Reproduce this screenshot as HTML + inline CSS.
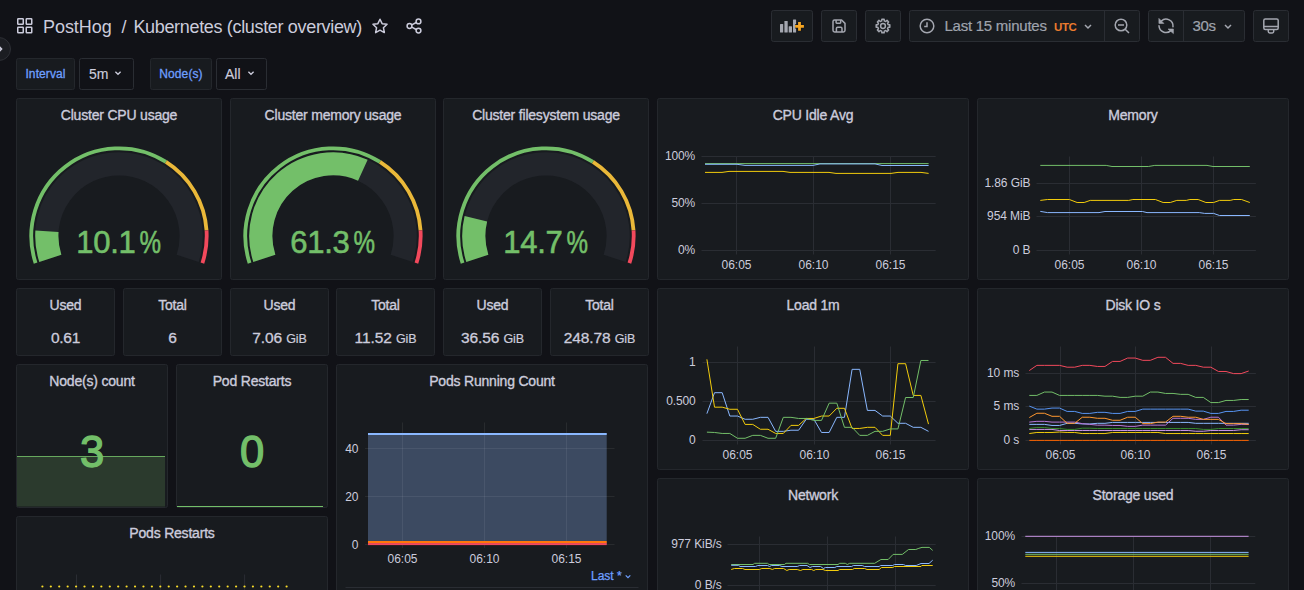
<!DOCTYPE html><html><head><meta charset="utf-8"><style>html,body{margin:0;padding:0;background:#111217;width:1304px;height:590px;overflow:hidden;position:relative}</style></head><body><svg width="1304" height="590" viewBox="0 0 1304 590" style="position:absolute;left:0;top:0;font-family:'Liberation Sans', sans-serif">
<rect width="1304" height="590" fill="#111217"/>
<rect x="17.75" y="18.75" width="5.5" height="5.5" rx="0.6" fill="none" stroke="#ccccdc" stroke-width="1.5"/>
<rect x="26.25" y="18.75" width="5.5" height="5.5" rx="0.6" fill="none" stroke="#ccccdc" stroke-width="1.5"/>
<rect x="17.75" y="27.25" width="5.5" height="5.5" rx="0.6" fill="none" stroke="#ccccdc" stroke-width="1.5"/>
<rect x="26.25" y="27.25" width="5.5" height="5.5" rx="0.6" fill="none" stroke="#ccccdc" stroke-width="1.5"/>
<text x="43" y="33" text-anchor="start" style="font-size:18px;fill:#ccccdc;font-weight:400;letter-spacing:-0.05px;" >PostHog</text>
<text x="121.5" y="33" text-anchor="start" style="font-size:18px;fill:#ccccdc;font-weight:400;" >/</text>
<text x="133.4" y="33" text-anchor="start" style="font-size:18px;fill:#ccccdc;font-weight:400;letter-spacing:-0.33px;" >Kubernetes (cluster overview)</text>
<polygon points="380.00,19.20 382.12,23.69 387.04,24.31 383.42,27.71 384.35,32.59 380.00,30.20 375.65,32.59 376.58,27.71 372.96,24.31 377.88,23.69" fill="none" stroke="#ccccdc" stroke-width="1.5" stroke-linejoin="round"/>
<g fill="none" stroke="#ccccdc" stroke-width="1.5"><circle cx="409.5" cy="26" r="2.4"/><circle cx="418.5" cy="21.4" r="2.4"/><circle cx="418.5" cy="30.6" r="2.4"/><path d="M411.8 24.8 L416.2 22.5 M411.8 27.2 L416.2 29.5"/></g>
<circle cx="-1" cy="49" r="11.5" fill="#1b1d22" stroke="#2d2f35" stroke-width="1"/>
<path d="M-1 46.5 L1.5 49 L-1 51.5" fill="none" stroke="#ccccdc" stroke-width="1.6"/>
<rect x="771.5" y="10.5" width="41" height="31" rx="2" fill="#181b1f" stroke="#2a2d33" stroke-width="1"/>
<rect x="821.5" y="10.5" width="35" height="31" rx="2" fill="#181b1f" stroke="#2a2d33" stroke-width="1"/>
<rect x="865.5" y="10.5" width="35" height="31" rx="2" fill="#181b1f" stroke="#2a2d33" stroke-width="1"/>
<rect x="909.5" y="10.5" width="230" height="31" rx="2" fill="#181b1f" stroke="#2a2d33" stroke-width="1"/>
<rect x="1148.5" y="10.5" width="96" height="31" rx="2" fill="#181b1f" stroke="#2a2d33" stroke-width="1"/>
<rect x="1253.5" y="10.5" width="35" height="31" rx="2" fill="#181b1f" stroke="#2a2d33" stroke-width="1"/>
<line x1="1104.5" y1="11" x2="1104.5" y2="41" stroke="#2a2d33"/>
<line x1="1183.5" y1="11" x2="1183.5" y2="41" stroke="#2a2d33"/>
<g fill="#a4a7b0"><rect x="780" y="24" width="3.2" height="8.6" rx="0.5"/><rect x="784.4" y="21.1" width="3.3" height="11.5" rx="0.5"/><rect x="788.7" y="26.3" width="3.3" height="6.3" rx="0.5"/><rect x="793" y="19.4" width="3.1" height="13.2" rx="0.5"/></g>
<path d="M799.5 22 V30.8 M795.1 26.4 H803.9" stroke="#111217" stroke-width="4.4"/>
<path d="M799.5 22 V30.8 M795.1 26.4 H803.9" stroke="#f5a623" stroke-width="2.8"/>
<g fill="none" stroke="#a4a7b0" stroke-width="1.5" stroke-linejoin="round"><path d="M834.6 19.95 H841.6 L845 23.35 V30.35 Q845 31.95 843.4 31.95 H834.6 Q833 31.95 833 30.35 V21.55 Q833 19.95 834.6 19.95 Z"/><path d="M836.1 20 V22.5 Q836.1 23.2 836.8 23.2 H840 Q840.7 23.2 840.7 22.5 V20"/><path d="M836.4 31.9 V28.4 Q836.4 27.3 837.5 27.3 H840.9 Q842 27.3 842 28.4 V31.9"/></g>
<path d="M881.72 20.86 L881.87 19.19 L884.13 19.19 L884.28 20.86 L885.73 21.46 L887.01 20.39 L888.61 21.99 L887.54 23.27 L888.14 24.72 L889.81 24.87 L889.81 27.13 L888.14 27.28 L887.54 28.73 L888.61 30.01 L887.01 31.61 L885.73 30.54 L884.28 31.14 L884.13 32.81 L881.87 32.81 L881.72 31.14 L880.27 30.54 L878.99 31.61 L877.39 30.01 L878.46 28.73 L877.86 27.28 L876.19 27.13 L876.19 24.87 L877.86 24.72 L878.46 23.27 L877.39 21.99 L878.99 20.39 L880.27 21.46 Z" fill="none" stroke="#a4a7b0" stroke-width="1.5" stroke-linejoin="round"/>
<circle cx="883" cy="26" r="2.4" fill="none" stroke="#a4a7b0" stroke-width="1.5"/>
<g fill="none" stroke="#a4a7b0" stroke-width="1.5"><circle cx="927" cy="26" r="6.8"/><path d="M927 22.2 V26.4 H924.2"/></g>
<text x="944.5" y="31" text-anchor="start" style="font-size:15px;fill:#9fa3ad;font-weight:400;letter-spacing:-0.25px;stroke:#9fa3ad;stroke-width:0.2px;" >Last 15 minutes</text>
<text x="1054" y="31" text-anchor="start" style="font-size:11.5px;fill:#eb7b2e;font-weight:700;letter-spacing:-0.4px;" >UTC</text>
<path d="M1085 25.0 L1088 28.0 L1091 25.0" fill="none" stroke="#a4a7b0" stroke-width="1.5"/>
<g fill="none" stroke="#a4a7b0" stroke-width="1.5"><circle cx="1121" cy="25" r="5.8"/><path d="M1125.2 29.2 L1129 33 M1118 25 H1124"/></g>
<g fill="none" stroke="#a4a7b0" stroke-width="1.5" stroke-linecap="round"><path d="M1161.3 21 A7 7 0 0 1 1173 26.8"/><path d="M1159 25.8 A7 7 0 0 0 1170.8 30.6"/></g>
<path d="M1158.9 18.4 L1158.9 23.4 L1163.9 23.4 Z" fill="#a4a7b0" stroke="#a4a7b0" stroke-width="0.6" stroke-linejoin="round"/><path d="M1168 29 L1173.4 29 L1173.4 33.6 Z" fill="#a4a7b0" stroke="#a4a7b0" stroke-width="0.6" stroke-linejoin="round"/>
<text x="1192.5" y="31" text-anchor="start" style="font-size:15px;fill:#9fa3ad;font-weight:400;letter-spacing:-0.4px;stroke:#9fa3ad;stroke-width:0.2px;" >30s</text>
<path d="M1225 25.0 L1228 28.0 L1231 25.0" fill="none" stroke="#a4a7b0" stroke-width="1.5"/>
<g fill="none" stroke="#a4a7b0" stroke-width="1.5"><rect x="1263.8" y="19" width="14.4" height="10.5" rx="1.5"/><path d="M1264 26.5 H1278"/><path d="M1268.3 29.8 V31.6 Q1268.3 33 1269.7 33 H1272.3 Q1273.7 33 1273.7 31.6 V29.8"/></g>
<rect x="16.5" y="58.5" width="58" height="31" rx="2" fill="#181b1f" stroke="#24272c"/>
<text x="45.5" y="78" text-anchor="middle" style="font-size:12px;fill:#6e9fff;font-weight:400;letter-spacing:0.1px;stroke:#6e9fff;stroke-width:0.3px;" >Interval</text>
<rect x="79.5" y="58.5" width="54" height="31" rx="2" fill="#111217" stroke="#2a2d33"/>
<text x="89" y="79" text-anchor="start" style="font-size:14px;fill:#ccccdc;font-weight:400;stroke:#ccccdc;stroke-width:0.15px;" >5m</text>
<path d="M115.4 71.7 L118 74.3 L120.6 71.7" fill="none" stroke="#ccccdc" stroke-width="1.3"/>
<rect x="150.5" y="58.5" width="61" height="31" rx="2" fill="#181b1f" stroke="#24272c"/>
<text x="181.0" y="78" text-anchor="middle" style="font-size:12px;fill:#6e9fff;font-weight:400;letter-spacing:0.1px;stroke:#6e9fff;stroke-width:0.3px;" >Node(s)</text>
<rect x="216.5" y="58.5" width="50" height="31" rx="2" fill="#111217" stroke="#2a2d33"/>
<text x="225" y="79" text-anchor="start" style="font-size:14px;fill:#ccccdc;font-weight:400;stroke:#ccccdc;stroke-width:0.15px;" >All</text>
<path d="M248.4 71.7 L251 74.3 L253.6 71.7" fill="none" stroke="#ccccdc" stroke-width="1.3"/>
<rect x="16.5" y="98.5" width="205" height="181" rx="2" ry="2" fill="#181b1f" stroke="#24272c" stroke-width="1"/>
<text x="119.0" y="120" text-anchor="middle" style="font-size:14px;fill:#ccccdc;font-weight:400;letter-spacing:-0.2px;stroke:#ccccdc;stroke-width:0.35px;" >Cluster CPU usage</text>
<path d="M35.59 263.10 A87.7 87.7 0 0 1 165.99 161.95" fill="none" stroke="#73bf69" stroke-width="3.8"/>
<path d="M165.99 161.95 A87.7 87.7 0 0 1 206.53 230.49" fill="none" stroke="#eab839" stroke-width="3.8"/>
<path d="M206.53 230.49 A87.7 87.7 0 0 1 202.41 263.10" fill="none" stroke="#f2495c" stroke-width="3.8"/>
<path d="M50.33 258.31 A72.2 72.2 0 1 1 187.67 258.31" fill="none" stroke="#22252b" stroke-width="23.2"/>
<path d="M50.33 258.31 A72.2 72.2 0 0 1 46.96 231.19" fill="none" stroke="#73bf69" stroke-width="23.2"/>
<text x="135.4" y="253" text-anchor="end" style="font-size:31px;fill:#73bf69;stroke:#73bf69;stroke-width:0.6px;letter-spacing:-0.3px">10.1</text>
<text transform="translate(139.4,253) scale(0.78,1)" style="font-size:31px;fill:#73bf69;stroke:#73bf69;stroke-width:0.6px">%</text>
<rect x="230.5" y="98.5" width="205" height="181" rx="2" ry="2" fill="#181b1f" stroke="#24272c" stroke-width="1"/>
<text x="333.0" y="120" text-anchor="middle" style="font-size:14px;fill:#ccccdc;font-weight:400;letter-spacing:-0.2px;stroke:#ccccdc;stroke-width:0.35px;" >Cluster memory usage</text>
<path d="M249.59 263.10 A87.7 87.7 0 0 1 379.99 161.95" fill="none" stroke="#73bf69" stroke-width="3.8"/>
<path d="M379.99 161.95 A87.7 87.7 0 0 1 420.53 230.49" fill="none" stroke="#eab839" stroke-width="3.8"/>
<path d="M420.53 230.49 A87.7 87.7 0 0 1 416.41 263.10" fill="none" stroke="#f2495c" stroke-width="3.8"/>
<path d="M264.33 258.31 A72.2 72.2 0 1 1 401.67 258.31" fill="none" stroke="#22252b" stroke-width="23.2"/>
<path d="M264.33 258.31 A72.2 72.2 0 0 1 362.84 170.25" fill="none" stroke="#73bf69" stroke-width="23.2"/>
<text x="349.4" y="253" text-anchor="end" style="font-size:31px;fill:#73bf69;stroke:#73bf69;stroke-width:0.6px;letter-spacing:-0.3px">61.3</text>
<text transform="translate(353.4,253) scale(0.78,1)" style="font-size:31px;fill:#73bf69;stroke:#73bf69;stroke-width:0.6px">%</text>
<rect x="443.5" y="98.5" width="205" height="181" rx="2" ry="2" fill="#181b1f" stroke="#24272c" stroke-width="1"/>
<text x="546.0" y="120" text-anchor="middle" style="font-size:14px;fill:#ccccdc;font-weight:400;letter-spacing:-0.2px;stroke:#ccccdc;stroke-width:0.35px;" >Cluster filesystem usage</text>
<path d="M462.59 263.10 A87.7 87.7 0 0 1 592.99 161.95" fill="none" stroke="#73bf69" stroke-width="3.8"/>
<path d="M592.99 161.95 A87.7 87.7 0 0 1 633.53 230.49" fill="none" stroke="#eab839" stroke-width="3.8"/>
<path d="M633.53 230.49 A87.7 87.7 0 0 1 629.41 263.10" fill="none" stroke="#f2495c" stroke-width="3.8"/>
<path d="M477.33 258.31 A72.2 72.2 0 1 1 614.67 258.31" fill="none" stroke="#22252b" stroke-width="23.2"/>
<path d="M477.33 258.31 A72.2 72.2 0 0 1 475.87 218.84" fill="none" stroke="#73bf69" stroke-width="23.2"/>
<text x="562.4" y="253" text-anchor="end" style="font-size:31px;fill:#73bf69;stroke:#73bf69;stroke-width:0.6px;letter-spacing:-0.3px">14.7</text>
<text transform="translate(566.4,253) scale(0.78,1)" style="font-size:31px;fill:#73bf69;stroke:#73bf69;stroke-width:0.6px">%</text>
<rect x="16.5" y="288.5" width="98" height="67" rx="2" ry="2" fill="#181b1f" stroke="#24272c" stroke-width="1"/>
<text x="65.5" y="310" text-anchor="middle" style="font-size:14px;fill:#ccccdc;font-weight:400;letter-spacing:-0.2px;stroke:#ccccdc;stroke-width:0.35px;" >Used</text>
<text x="65.5" y="343.2" text-anchor="middle" style="font-size:15.5px;fill:#ccccdc;font-weight:400;letter-spacing:-0.3px;stroke:#ccccdc;stroke-width:0.3px;" >0.61</text>
<rect x="123.5" y="288.5" width="98" height="67" rx="2" ry="2" fill="#181b1f" stroke="#24272c" stroke-width="1"/>
<text x="172.5" y="310" text-anchor="middle" style="font-size:14px;fill:#ccccdc;font-weight:400;letter-spacing:-0.2px;stroke:#ccccdc;stroke-width:0.35px;" >Total</text>
<text x="172.5" y="343.2" text-anchor="middle" style="font-size:15.5px;fill:#ccccdc;font-weight:400;letter-spacing:-0.3px;stroke:#ccccdc;stroke-width:0.3px;" >6</text>
<rect x="230.5" y="288.5" width="98" height="67" rx="2" ry="2" fill="#181b1f" stroke="#24272c" stroke-width="1"/>
<text x="279.5" y="310" text-anchor="middle" style="font-size:14px;fill:#ccccdc;font-weight:400;letter-spacing:-0.2px;stroke:#ccccdc;stroke-width:0.35px;" >Used</text>
<text x="279.5" y="343.2" text-anchor="middle" style="font-size:15.5px;fill:#ccccdc;stroke:#ccccdc;stroke-width:0.3px;letter-spacing:-0.1px">7.06 <tspan style="font-size:12.5px;stroke-width:0.2px">GiB</tspan></text>
<rect x="336.5" y="288.5" width="98" height="67" rx="2" ry="2" fill="#181b1f" stroke="#24272c" stroke-width="1"/>
<text x="385.5" y="310" text-anchor="middle" style="font-size:14px;fill:#ccccdc;font-weight:400;letter-spacing:-0.2px;stroke:#ccccdc;stroke-width:0.35px;" >Total</text>
<text x="385.5" y="343.2" text-anchor="middle" style="font-size:15.5px;fill:#ccccdc;stroke:#ccccdc;stroke-width:0.3px;letter-spacing:-0.1px">11.52 <tspan style="font-size:12.5px;stroke-width:0.2px">GiB</tspan></text>
<rect x="443.5" y="288.5" width="98" height="67" rx="2" ry="2" fill="#181b1f" stroke="#24272c" stroke-width="1"/>
<text x="492.5" y="310" text-anchor="middle" style="font-size:14px;fill:#ccccdc;font-weight:400;letter-spacing:-0.2px;stroke:#ccccdc;stroke-width:0.35px;" >Used</text>
<text x="492.5" y="343.2" text-anchor="middle" style="font-size:15.5px;fill:#ccccdc;stroke:#ccccdc;stroke-width:0.3px;letter-spacing:-0.1px">36.56 <tspan style="font-size:12.5px;stroke-width:0.2px">GiB</tspan></text>
<rect x="550.5" y="288.5" width="98" height="67" rx="2" ry="2" fill="#181b1f" stroke="#24272c" stroke-width="1"/>
<text x="599.5" y="310" text-anchor="middle" style="font-size:14px;fill:#ccccdc;font-weight:400;letter-spacing:-0.2px;stroke:#ccccdc;stroke-width:0.35px;" >Total</text>
<text x="599.5" y="343.2" text-anchor="middle" style="font-size:15.5px;fill:#ccccdc;stroke:#ccccdc;stroke-width:0.3px;letter-spacing:-0.1px">248.78 <tspan style="font-size:12.5px;stroke-width:0.2px">GiB</tspan></text>
<rect x="16.5" y="364.5" width="151" height="143" rx="2" ry="2" fill="#181b1f" stroke="#24272c" stroke-width="1"/>
<text x="92.0" y="386" text-anchor="middle" style="font-size:14px;fill:#ccccdc;font-weight:400;letter-spacing:-0.2px;stroke:#ccccdc;stroke-width:0.35px;" >Node(s) count</text>
<rect x="17" y="456.5" width="148" height="50.0" fill="#2b3a2d"/>
<line x1="17" y1="456.5" x2="165" y2="456.5" stroke="#73bf69" stroke-width="1" stroke-opacity="0.85"/>
<text x="92.0" y="467.0" text-anchor="middle" style="font-size:43.6px;fill:#73bf69;font-weight:400;stroke:#73bf69;stroke-width:1.3px;" >3</text>
<rect x="176.5" y="364.5" width="151" height="143" rx="2" ry="2" fill="#181b1f" stroke="#24272c" stroke-width="1"/>
<text x="252.0" y="386" text-anchor="middle" style="font-size:14px;fill:#ccccdc;font-weight:400;letter-spacing:-0.2px;stroke:#ccccdc;stroke-width:0.35px;" >Pod Restarts</text>
<line x1="177" y1="506.5" x2="323" y2="506.5" stroke="#73bf69" stroke-width="1"/>
<text x="252.0" y="467.0" text-anchor="middle" style="font-size:43.6px;fill:#73bf69;font-weight:400;stroke:#73bf69;stroke-width:1.3px;" >0</text>
<rect x="336.5" y="364.5" width="311" height="239" rx="2" ry="2" fill="#181b1f" stroke="#24272c" stroke-width="1"/>
<text x="492.0" y="386" text-anchor="middle" style="font-size:14px;fill:#ccccdc;font-weight:400;letter-spacing:-0.2px;stroke:#ccccdc;stroke-width:0.35px;" >Pods Running Count</text>
<rect x="368" y="433" width="238.7" height="111.5" fill="#3c4a61"/>
<line x1="365" y1="448.5" x2="614.5" y2="448.5" stroke="#ffffff" stroke-opacity="0.07" stroke-width="1"/>
<line x1="365" y1="496.5" x2="614.5" y2="496.5" stroke="#ffffff" stroke-opacity="0.07" stroke-width="1"/>
<line x1="365" y1="544.5" x2="614.5" y2="544.5" stroke="#ffffff" stroke-opacity="0.07" stroke-width="1"/>
<line x1="402.5" y1="422.5" x2="402.5" y2="548" stroke="#ffffff" stroke-opacity="0.07" stroke-width="1"/>
<line x1="484.5" y1="422.5" x2="484.5" y2="548" stroke="#ffffff" stroke-opacity="0.07" stroke-width="1"/>
<line x1="566.5" y1="422.5" x2="566.5" y2="548" stroke="#ffffff" stroke-opacity="0.07" stroke-width="1"/>
<line x1="368" y1="434" x2="606.7" y2="434" stroke="#8ab8ff" stroke-width="2"/>
<rect x="368" y="541" width="238.7" height="2.2" fill="#ff780a"/>
<rect x="368" y="543.1" width="238.7" height="2" fill="#f2495c"/>
<text x="358.5" y="452.5" text-anchor="end" style="font-size:12px;fill:#ccccdc;font-weight:400;" >40</text>
<text x="358.5" y="500.5" text-anchor="end" style="font-size:12px;fill:#ccccdc;font-weight:400;" >20</text>
<text x="358.5" y="548.5" text-anchor="end" style="font-size:12px;fill:#ccccdc;font-weight:400;" >0</text>
<text x="402.5" y="563" text-anchor="middle" style="font-size:12px;fill:#ccccdc;font-weight:400;" >06:05</text>
<text x="484.5" y="563" text-anchor="middle" style="font-size:12px;fill:#ccccdc;font-weight:400;" >06:10</text>
<text x="566.5" y="563" text-anchor="middle" style="font-size:12px;fill:#ccccdc;font-weight:400;" >06:15</text>
<text x="591" y="580" text-anchor="start" style="font-size:12px;fill:#6e9fff;font-weight:400;stroke:#6e9fff;stroke-width:0.25px;" >Last *</text>
<path d="M625.7 575.35 L628 577.65 L630.3 575.35" fill="none" stroke="#6e9fff" stroke-width="1.2"/>
<line x1="345.5" y1="587.5" x2="638.5" y2="587.5" stroke="#2a2d33" stroke-width="1"/>
<rect x="16.5" y="516.5" width="311" height="199" rx="2" ry="2" fill="#181b1f" stroke="#24272c" stroke-width="1"/>
<text x="172.0" y="538" text-anchor="middle" style="font-size:14px;fill:#ccccdc;font-weight:400;letter-spacing:-0.2px;stroke:#ccccdc;stroke-width:0.35px;" >Pods Restarts</text>
<line x1="76.5" y1="574.5" x2="76.5" y2="590" stroke="#2a2d33" stroke-width="1"/>
<line x1="160.6" y1="574.5" x2="160.6" y2="590" stroke="#2a2d33" stroke-width="1"/>
<line x1="244.6" y1="574.5" x2="244.6" y2="590" stroke="#2a2d33" stroke-width="1"/>
<circle cx="42.40" cy="586.5" r="1.1" fill="#fade2a"/>
<circle cx="50.82" cy="586.5" r="1.1" fill="#fade2a"/>
<circle cx="59.24" cy="586.5" r="1.1" fill="#fade2a"/>
<circle cx="67.66" cy="586.5" r="1.1" fill="#fade2a"/>
<circle cx="76.08" cy="586.5" r="1.1" fill="#fade2a"/>
<circle cx="84.50" cy="586.5" r="1.1" fill="#fade2a"/>
<circle cx="92.92" cy="586.5" r="1.1" fill="#fade2a"/>
<circle cx="101.34" cy="586.5" r="1.1" fill="#fade2a"/>
<circle cx="109.77" cy="586.5" r="1.1" fill="#fade2a"/>
<circle cx="118.19" cy="586.5" r="1.1" fill="#fade2a"/>
<circle cx="126.61" cy="586.5" r="1.1" fill="#fade2a"/>
<circle cx="135.03" cy="586.5" r="1.1" fill="#fade2a"/>
<circle cx="143.45" cy="586.5" r="1.1" fill="#fade2a"/>
<circle cx="151.87" cy="586.5" r="1.1" fill="#fade2a"/>
<circle cx="160.29" cy="586.5" r="1.1" fill="#fade2a"/>
<circle cx="168.71" cy="586.5" r="1.1" fill="#fade2a"/>
<circle cx="177.13" cy="586.5" r="1.1" fill="#fade2a"/>
<circle cx="185.55" cy="586.5" r="1.1" fill="#fade2a"/>
<circle cx="193.97" cy="586.5" r="1.1" fill="#fade2a"/>
<circle cx="202.39" cy="586.5" r="1.1" fill="#fade2a"/>
<circle cx="210.81" cy="586.5" r="1.1" fill="#fade2a"/>
<circle cx="219.23" cy="586.5" r="1.1" fill="#fade2a"/>
<circle cx="227.66" cy="586.5" r="1.1" fill="#fade2a"/>
<circle cx="236.08" cy="586.5" r="1.1" fill="#fade2a"/>
<circle cx="244.50" cy="586.5" r="1.1" fill="#fade2a"/>
<circle cx="252.92" cy="586.5" r="1.1" fill="#fade2a"/>
<circle cx="261.34" cy="586.5" r="1.1" fill="#fade2a"/>
<circle cx="269.76" cy="586.5" r="1.1" fill="#fade2a"/>
<circle cx="278.18" cy="586.5" r="1.1" fill="#fade2a"/>
<circle cx="286.60" cy="586.5" r="1.1" fill="#fade2a"/>
<rect x="657.5" y="98.5" width="311" height="181" rx="2" ry="2" fill="#181b1f" stroke="#24272c" stroke-width="1"/>
<text x="813.0" y="120" text-anchor="middle" style="font-size:14px;fill:#ccccdc;font-weight:400;letter-spacing:-0.2px;stroke:#ccccdc;stroke-width:0.35px;" >CPU Idle Avg</text>
<rect x="977.5" y="98.5" width="311" height="181" rx="2" ry="2" fill="#181b1f" stroke="#24272c" stroke-width="1"/>
<text x="1133.0" y="120" text-anchor="middle" style="font-size:14px;fill:#ccccdc;font-weight:400;letter-spacing:-0.2px;stroke:#ccccdc;stroke-width:0.35px;" >Memory</text>
<rect x="657.5" y="288.5" width="311" height="181" rx="2" ry="2" fill="#181b1f" stroke="#24272c" stroke-width="1"/>
<text x="813.0" y="310" text-anchor="middle" style="font-size:14px;fill:#ccccdc;font-weight:400;letter-spacing:-0.2px;stroke:#ccccdc;stroke-width:0.35px;" >Load 1m</text>
<rect x="977.5" y="288.5" width="311" height="181" rx="2" ry="2" fill="#181b1f" stroke="#24272c" stroke-width="1"/>
<text x="1133.0" y="310" text-anchor="middle" style="font-size:14px;fill:#ccccdc;font-weight:400;letter-spacing:-0.2px;stroke:#ccccdc;stroke-width:0.35px;" >Disk IO s</text>
<rect x="657.5" y="478.5" width="311" height="199" rx="2" ry="2" fill="#181b1f" stroke="#24272c" stroke-width="1"/>
<text x="813.0" y="500" text-anchor="middle" style="font-size:14px;fill:#ccccdc;font-weight:400;letter-spacing:-0.2px;stroke:#ccccdc;stroke-width:0.35px;" >Network</text>
<rect x="977.5" y="478.5" width="311" height="199" rx="2" ry="2" fill="#181b1f" stroke="#24272c" stroke-width="1"/>
<text x="1133.0" y="500" text-anchor="middle" style="font-size:14px;fill:#ccccdc;font-weight:400;letter-spacing:-0.2px;stroke:#ccccdc;stroke-width:0.35px;" >Storage used</text>
<line x1="701.5" y1="156.5" x2="935.7" y2="156.5" stroke="#2a2d33" stroke-width="1"/>
<line x1="701.5" y1="203.5" x2="935.7" y2="203.5" stroke="#2a2d33" stroke-width="1"/>
<line x1="701.5" y1="250.5" x2="935.7" y2="250.5" stroke="#2a2d33" stroke-width="1"/>
<line x1="736.5" y1="156.5" x2="736.5" y2="254.5" stroke="#2a2d33" stroke-width="1"/>
<line x1="813.5" y1="156.5" x2="813.5" y2="254.5" stroke="#2a2d33" stroke-width="1"/>
<line x1="890.5" y1="156.5" x2="890.5" y2="254.5" stroke="#2a2d33" stroke-width="1"/>
<text x="695.2" y="160.0" text-anchor="end" style="font-size:12px;fill:#ccccdc;font-weight:400;letter-spacing:-0.1px;" >100%</text>
<text x="695.2" y="207.0" text-anchor="end" style="font-size:12px;fill:#ccccdc;font-weight:400;letter-spacing:-0.1px;" >50%</text>
<text x="695.2" y="254.0" text-anchor="end" style="font-size:12px;fill:#ccccdc;font-weight:400;letter-spacing:-0.1px;" >0%</text>
<text x="736.5" y="269" text-anchor="middle" style="font-size:12px;fill:#ccccdc;font-weight:400;" >06:05</text>
<text x="813.5" y="269" text-anchor="middle" style="font-size:12px;fill:#ccccdc;font-weight:400;" >06:10</text>
<text x="890.5" y="269" text-anchor="middle" style="font-size:12px;fill:#ccccdc;font-weight:400;" >06:15</text>
<line x1="1036.5" y1="183.5" x2="1255.9" y2="183.5" stroke="#2a2d33" stroke-width="1"/>
<line x1="1036.5" y1="216.5" x2="1255.9" y2="216.5" stroke="#2a2d33" stroke-width="1"/>
<line x1="1036.5" y1="250.5" x2="1255.9" y2="250.5" stroke="#2a2d33" stroke-width="1"/>
<line x1="1069.5" y1="156.5" x2="1069.5" y2="254.5" stroke="#2a2d33" stroke-width="1"/>
<line x1="1141.5" y1="156.5" x2="1141.5" y2="254.5" stroke="#2a2d33" stroke-width="1"/>
<line x1="1213.5" y1="156.5" x2="1213.5" y2="254.5" stroke="#2a2d33" stroke-width="1"/>
<text x="1030.4" y="186.5" text-anchor="end" style="font-size:12px;fill:#ccccdc;font-weight:400;letter-spacing:-0.1px;" >1.86 GiB</text>
<text x="1030.4" y="219.5" text-anchor="end" style="font-size:12px;fill:#ccccdc;font-weight:400;letter-spacing:-0.1px;" >954 MiB</text>
<text x="1030.4" y="253.5" text-anchor="end" style="font-size:12px;fill:#ccccdc;font-weight:400;letter-spacing:-0.1px;" >0 B</text>
<text x="1069.5" y="269" text-anchor="middle" style="font-size:12px;fill:#ccccdc;font-weight:400;" >06:05</text>
<text x="1141.5" y="269" text-anchor="middle" style="font-size:12px;fill:#ccccdc;font-weight:400;" >06:10</text>
<text x="1213.5" y="269" text-anchor="middle" style="font-size:12px;fill:#ccccdc;font-weight:400;" >06:15</text>
<line x1="702.5" y1="362.5" x2="935.6" y2="362.5" stroke="#2a2d33" stroke-width="1"/>
<line x1="702.5" y1="401.5" x2="935.6" y2="401.5" stroke="#2a2d33" stroke-width="1"/>
<line x1="702.5" y1="440.5" x2="935.6" y2="440.5" stroke="#2a2d33" stroke-width="1"/>
<line x1="737.5" y1="346.5" x2="737.5" y2="444.5" stroke="#2a2d33" stroke-width="1"/>
<line x1="814.5" y1="346.5" x2="814.5" y2="444.5" stroke="#2a2d33" stroke-width="1"/>
<line x1="890.5" y1="346.5" x2="890.5" y2="444.5" stroke="#2a2d33" stroke-width="1"/>
<text x="695.7" y="366.0" text-anchor="end" style="font-size:12px;fill:#ccccdc;font-weight:400;letter-spacing:-0.1px;" >1</text>
<text x="695.7" y="405.0" text-anchor="end" style="font-size:12px;fill:#ccccdc;font-weight:400;letter-spacing:-0.1px;" >0.500</text>
<text x="695.7" y="444.0" text-anchor="end" style="font-size:12px;fill:#ccccdc;font-weight:400;letter-spacing:-0.1px;" >0</text>
<text x="737.5" y="459" text-anchor="middle" style="font-size:12px;fill:#ccccdc;font-weight:400;" >06:05</text>
<text x="814.5" y="459" text-anchor="middle" style="font-size:12px;fill:#ccccdc;font-weight:400;" >06:10</text>
<text x="890.5" y="459" text-anchor="middle" style="font-size:12px;fill:#ccccdc;font-weight:400;" >06:15</text>
<line x1="1025.5" y1="373.5" x2="1255.9" y2="373.5" stroke="#2a2d33" stroke-width="1"/>
<line x1="1025.5" y1="406.5" x2="1255.9" y2="406.5" stroke="#2a2d33" stroke-width="1"/>
<line x1="1025.5" y1="440.5" x2="1255.9" y2="440.5" stroke="#2a2d33" stroke-width="1"/>
<line x1="1060.5" y1="346.5" x2="1060.5" y2="444.5" stroke="#2a2d33" stroke-width="1"/>
<line x1="1135.5" y1="346.5" x2="1135.5" y2="444.5" stroke="#2a2d33" stroke-width="1"/>
<line x1="1211.5" y1="346.5" x2="1211.5" y2="444.5" stroke="#2a2d33" stroke-width="1"/>
<text x="1019.2" y="376.5" text-anchor="end" style="font-size:12px;fill:#ccccdc;font-weight:400;letter-spacing:-0.1px;" >10 ms</text>
<text x="1019.2" y="409.5" text-anchor="end" style="font-size:12px;fill:#ccccdc;font-weight:400;letter-spacing:-0.1px;" >5 ms</text>
<text x="1019.2" y="443.5" text-anchor="end" style="font-size:12px;fill:#ccccdc;font-weight:400;letter-spacing:-0.1px;" >0 s</text>
<text x="1060.5" y="459" text-anchor="middle" style="font-size:12px;fill:#ccccdc;font-weight:400;" >06:05</text>
<text x="1135.5" y="459" text-anchor="middle" style="font-size:12px;fill:#ccccdc;font-weight:400;" >06:10</text>
<text x="1211.5" y="459" text-anchor="middle" style="font-size:12px;fill:#ccccdc;font-weight:400;" >06:15</text>
<line x1="727.5" y1="544.5" x2="935.7" y2="544.5" stroke="#2a2d33" stroke-width="1"/>
<line x1="727.5" y1="585.5" x2="935.7" y2="585.5" stroke="#2a2d33" stroke-width="1"/>
<line x1="759.5" y1="536.5" x2="759.5" y2="590" stroke="#2a2d33" stroke-width="1"/>
<line x1="827.5" y1="536.5" x2="827.5" y2="590" stroke="#2a2d33" stroke-width="1"/>
<line x1="895.5" y1="536.5" x2="895.5" y2="590" stroke="#2a2d33" stroke-width="1"/>
<text x="721.7" y="547.5" text-anchor="end" style="font-size:12px;fill:#ccccdc;font-weight:400;letter-spacing:-0.1px;" >977 KiB/s</text>
<text x="721.7" y="588.5" text-anchor="end" style="font-size:12px;fill:#ccccdc;font-weight:400;letter-spacing:-0.1px;" >0 B/s</text>
<line x1="1021.5" y1="536.5" x2="1255.3" y2="536.5" stroke="#2a2d33" stroke-width="1"/>
<line x1="1021.5" y1="583.5" x2="1255.3" y2="583.5" stroke="#2a2d33" stroke-width="1"/>
<line x1="1056.5" y1="536.5" x2="1056.5" y2="590" stroke="#2a2d33" stroke-width="1"/>
<line x1="1133.5" y1="536.5" x2="1133.5" y2="590" stroke="#2a2d33" stroke-width="1"/>
<line x1="1210.5" y1="536.5" x2="1210.5" y2="590" stroke="#2a2d33" stroke-width="1"/>
<text x="1015.1" y="539.5" text-anchor="end" style="font-size:12px;fill:#ccccdc;font-weight:400;letter-spacing:-0.1px;" >100%</text>
<text x="1015.1" y="586.5" text-anchor="end" style="font-size:12px;fill:#ccccdc;font-weight:400;letter-spacing:-0.1px;" >50%</text>
<polyline points="705.00,163.60 928.60,163.60" fill="none" stroke="#73bf69" stroke-width="1.0" stroke-linejoin="round" stroke-opacity="1"/>
<polyline points="705.00,164.30 737.00,164.30 745.00,165.40 813.00,165.40 820.00,163.90 875.00,163.90 882.00,165.50 928.60,165.50" fill="none" stroke="#8ab8ff" stroke-width="1.0" stroke-linejoin="round" stroke-opacity="1"/>
<polyline points="705.00,172.40 722.00,172.40 729.00,171.40 783.00,171.40 790.00,172.40 829.00,172.40 836.00,173.40 891.00,173.40 898.00,172.40 921.00,172.40 928.60,173.40" fill="none" stroke="#f2cc0c" stroke-width="1.0" stroke-linejoin="round" stroke-opacity="1"/>
<polyline points="1040.30,165.40 1106.20,165.40 1112.00,166.50 1148.30,166.50 1154.80,165.40 1207.00,165.40 1213.00,166.50 1249.80,166.50" fill="none" stroke="#73bf69" stroke-width="1.0" stroke-linejoin="round" stroke-opacity="1"/>
<polyline points="1040.30,200.40 1047.50,199.50 1069.40,199.50 1077.10,202.50 1084.20,202.50 1090.20,200.40 1128.70,200.40 1132.90,199.50 1155.40,199.50 1163.10,202.50 1170.30,202.50 1176.80,200.40 1186.30,200.40 1189.90,199.50 1198.20,199.50 1205.90,202.50 1213.60,202.50 1219.50,200.40 1230.20,200.40 1233.80,199.50 1241.50,199.50 1249.80,202.50" fill="none" stroke="#f2cc0c" stroke-width="1.0" stroke-linejoin="round" stroke-opacity="1"/>
<polyline points="1040.30,211.40 1047.50,212.60 1099.00,212.60 1105.00,211.50 1142.40,211.50 1147.00,212.60 1199.30,212.60 1204.70,213.40 1213.60,213.40 1219.50,215.50 1249.80,215.50" fill="none" stroke="#8ab8ff" stroke-width="1.0" stroke-linejoin="round" stroke-opacity="1"/>
<polyline points="706.90,413.63 714.54,392.69 722.18,392.69 729.82,416.04 737.47,416.04 745.11,419.27 752.75,419.27 760.39,417.33 768.03,417.33 775.67,431.35 783.31,431.35 790.96,430.22 798.60,430.22 806.24,419.27 813.88,419.27 821.52,432.47 829.16,432.47 836.80,417.33 844.44,417.33 852.09,369.33 859.73,369.33 867.37,410.41 875.01,410.41 882.65,416.04 890.29,416.04 897.93,423.29 905.58,423.29 913.22,427.32 920.86,427.32 928.50,431.35" fill="none" stroke="#8ab8ff" stroke-width="1.0" stroke-linejoin="round" stroke-opacity="1"/>
<polyline points="706.90,359.34 714.54,407.18 722.18,407.18 729.82,409.28 737.47,409.28 745.11,424.42 752.75,424.42 760.39,429.25 768.03,429.25 775.67,433.44 783.31,433.44 790.96,425.39 798.60,425.39 806.24,418.46 813.88,418.46 821.52,416.04 829.16,416.04 836.80,408.31 844.44,408.31 852.09,428.45 859.73,428.45 867.37,427.32 875.01,427.32 882.65,435.37 890.29,435.37 897.93,363.69 905.58,363.69 913.22,395.43 920.86,395.43 928.50,424.10" fill="none" stroke="#f2cc0c" stroke-width="1.0" stroke-linejoin="round" stroke-opacity="1"/>
<polyline points="706.90,432.15 714.54,432.47 722.18,433.44 729.82,433.44 737.47,438.27 745.11,438.27 752.75,435.37 760.39,435.37 768.03,438.27 775.67,438.27 783.31,417.33 790.96,417.33 798.60,418.46 806.24,418.46 813.88,420.39 821.52,420.39 829.16,403.16 836.80,403.16 844.44,427.32 852.09,427.32 859.73,435.37 867.37,435.37 875.01,431.35 882.65,431.35 890.29,428.93 897.93,428.93 905.58,397.52 913.22,397.52 920.86,360.47 928.50,360.47" fill="none" stroke="#73bf69" stroke-width="1.0" stroke-linejoin="round" stroke-opacity="1"/>
<polyline points="1029.30,440.40 1036.87,440.40 1044.43,440.40 1052.00,440.40 1059.56,440.40 1067.13,440.40 1074.69,440.40 1082.26,440.40 1089.82,440.40 1097.39,440.40 1104.96,440.40 1112.52,440.40 1120.09,440.40 1127.65,440.40 1135.22,440.40 1142.78,440.40 1150.35,440.40 1157.91,440.40 1165.48,440.40 1173.04,440.40 1180.61,440.40 1188.18,440.40 1195.74,440.40 1203.31,440.40 1210.87,440.40 1218.44,440.40 1226.00,440.40 1233.57,440.40 1241.13,440.40 1248.70,440.40" fill="none" stroke="#fa6400" stroke-width="1.0" stroke-linejoin="round" stroke-opacity="1"/>
<polyline points="1029.30,433.54 1036.87,432.47 1044.43,432.47 1052.00,432.47 1059.56,432.02 1067.13,432.47 1074.69,432.47 1082.26,433.54 1089.82,433.54 1097.39,433.54 1104.96,433.54 1112.52,432.47 1120.09,432.47 1127.65,432.47 1135.22,432.47 1142.78,432.47 1150.35,432.47 1157.91,432.47 1165.48,433.54 1173.04,433.54 1180.61,433.54 1188.18,433.54 1195.74,433.54 1203.31,433.54 1210.87,433.54 1218.44,433.54 1226.00,433.54 1233.57,433.54 1241.13,433.54 1248.70,433.54" fill="none" stroke="#f2cc0c" stroke-width="1.0" stroke-linejoin="round" stroke-opacity="1"/>
<polyline points="1029.30,429.42 1036.87,429.42 1044.43,429.42 1052.00,429.42 1059.56,430.49 1067.13,430.49 1074.69,430.49 1082.26,430.49 1089.82,430.49 1097.39,430.49 1104.96,430.49 1112.52,430.49 1120.09,430.49 1127.65,430.49 1135.22,430.49 1142.78,430.49 1150.35,430.49 1157.91,430.49 1165.48,430.49 1173.04,430.49 1180.61,430.49 1188.18,430.49 1195.74,431.25 1203.31,431.25 1210.87,430.49 1218.44,430.49 1226.00,430.49 1233.57,430.49 1241.13,429.73 1248.70,429.73" fill="none" stroke="#ca95e5" stroke-width="1.0" stroke-linejoin="round" stroke-opacity="1"/>
<polyline points="1029.30,428.51 1036.87,427.44 1044.43,427.44 1052.00,428.51 1059.56,428.51 1067.13,429.42 1074.69,429.42 1082.26,428.20 1089.82,428.20 1097.39,428.51 1104.96,428.51 1112.52,428.51 1120.09,428.51 1127.65,428.51 1135.22,428.51 1142.78,428.51 1150.35,428.51 1157.91,428.51 1165.48,428.51 1173.04,428.51 1180.61,428.51 1188.18,428.51 1195.74,428.51 1203.31,429.42 1210.87,429.42 1218.44,428.51 1226.00,428.51 1233.57,428.51 1241.13,428.51 1248.70,428.51" fill="none" stroke="#37872d" stroke-width="1.0" stroke-linejoin="round" stroke-opacity="1"/>
<polyline points="1029.30,424.39 1036.87,424.39 1044.43,424.39 1052.00,425.46 1059.56,425.46 1067.13,423.32 1074.69,423.32 1082.26,423.93 1089.82,423.93 1097.39,423.32 1104.96,423.32 1112.52,422.41 1120.09,422.41 1127.65,422.41 1135.22,422.41 1142.78,422.41 1150.35,422.41 1157.91,422.41 1165.48,422.41 1173.04,422.41 1180.61,422.41 1188.18,422.41 1195.74,423.32 1203.31,423.32 1210.87,423.32 1218.44,423.32 1226.00,423.32 1233.57,423.32 1241.13,423.32 1248.70,423.32" fill="none" stroke="#8ab8ff" stroke-width="1.0" stroke-linejoin="round" stroke-opacity="1"/>
<polyline points="1029.30,422.10 1036.87,421.34 1044.43,421.34 1052.00,422.10 1059.56,422.10 1067.13,422.10 1074.69,422.10 1082.26,423.63 1089.82,424.39 1097.39,425.15 1104.96,425.15 1112.52,425.46 1120.09,425.46 1127.65,426.37 1135.22,426.37 1142.78,425.15 1150.35,425.15 1157.91,425.15 1165.48,425.15 1173.04,418.29 1180.61,418.29 1188.18,418.29 1195.74,419.36 1203.31,419.36 1210.87,417.22 1218.44,417.22 1226.00,425.15 1233.57,425.15 1241.13,424.39 1248.70,424.39" fill="none" stroke="#b877d9" stroke-width="1.0" stroke-linejoin="round" stroke-opacity="1"/>
<polyline points="1029.30,417.53 1036.87,413.26 1044.43,413.26 1052.00,416.31 1059.56,416.31 1067.13,423.32 1074.69,423.32 1082.26,417.22 1089.82,417.22 1097.39,418.29 1104.96,418.29 1112.52,420.27 1120.09,420.27 1127.65,417.22 1135.22,417.22 1142.78,423.63 1150.35,423.63 1157.91,422.10 1165.48,422.10 1173.04,416.31 1180.61,416.31 1188.18,417.22 1195.74,417.22 1203.31,419.36 1210.87,419.36 1218.44,419.36 1226.00,423.63 1233.57,423.63 1241.13,423.63 1248.70,424.39" fill="none" stroke="#ff9830" stroke-width="1.0" stroke-linejoin="round" stroke-opacity="1"/>
<polyline points="1029.30,406.09 1036.87,409.14 1044.43,409.14 1052.00,408.07 1059.56,408.07 1067.13,411.43 1074.69,411.43 1082.26,413.41 1089.82,413.41 1097.39,412.34 1104.96,412.34 1112.52,413.41 1120.09,413.41 1127.65,411.43 1135.22,411.43 1142.78,409.14 1150.35,409.14 1157.91,409.14 1165.48,409.14 1173.04,409.14 1180.61,409.14 1188.18,409.14 1195.74,411.12 1203.31,411.12 1210.87,413.41 1218.44,413.41 1226.00,411.43 1233.57,411.43 1241.13,410.21 1248.70,410.21" fill="none" stroke="#5794f2" stroke-width="1.0" stroke-linejoin="round" stroke-opacity="1"/>
<polyline points="1029.30,395.41 1036.87,395.41 1044.43,392.06 1052.00,392.06 1059.56,395.41 1067.13,395.41 1074.69,395.41 1082.26,395.41 1089.82,395.41 1097.39,395.41 1104.96,396.18 1112.52,396.18 1120.09,397.40 1127.65,397.40 1135.22,396.18 1142.78,396.18 1150.35,392.06 1157.91,392.06 1165.48,393.43 1173.04,393.43 1180.61,394.35 1188.18,394.35 1195.74,397.40 1203.31,397.40 1210.87,402.58 1218.44,402.58 1226.00,400.45 1233.57,400.45 1241.13,399.53 1248.70,399.53" fill="none" stroke="#73bf69" stroke-width="1.0" stroke-linejoin="round" stroke-opacity="1"/>
<polyline points="1029.30,370.56 1036.87,365.37 1044.43,365.37 1052.00,365.37 1059.56,365.37 1067.13,367.20 1074.69,367.20 1082.26,365.37 1089.82,365.37 1097.39,366.44 1104.96,366.44 1112.52,361.41 1120.09,361.41 1127.65,358.05 1135.22,358.05 1142.78,360.34 1150.35,360.34 1157.91,357.29 1165.48,357.29 1173.04,363.39 1180.61,363.39 1188.18,365.37 1195.74,365.37 1203.31,367.20 1210.87,367.20 1218.44,371.47 1226.00,371.47 1233.57,373.61 1241.13,373.61 1248.70,371.01" fill="none" stroke="#f2495c" stroke-width="1.0" stroke-linejoin="round" stroke-opacity="1"/>
<polyline points="731.20,564.50 753.00,564.50 754.60,563.30 767.50,563.30 769.00,564.50 784.40,564.50 786.00,563.30 807.70,563.30 809.30,564.50 838.00,564.50 839.70,563.30 845.30,563.30 847.30,564.50 847.30,564.50 849.70,563.30 874.70,563.30 880.90,559.50 888.20,559.50 893.10,554.40 902.30,554.40 908.50,549.50 915.80,549.50 918.90,548.30 918.90,548.30 922.00,547.40 929.30,547.40 932.70,550.40 932.70,550.40" fill="none" stroke="#73bf69" stroke-width="1.0" stroke-linejoin="round" stroke-opacity="1"/>
<polyline points="731.20,565.30 738.50,565.30 740.00,566.50 755.40,566.50 757.80,565.50 767.50,565.50 769.50,566.50 769.50,566.50 771.50,565.50 779.50,565.50 782.00,566.50 797.20,566.50 799.70,565.50 807.00,565.50 810.00,567.50 810.00,567.50 812.50,566.50 820.60,566.50 823.40,568.50 823.40,568.50 825.40,567.50 834.80,567.50 836.80,566.50 851.70,566.50 853.30,565.50 862.20,565.50 864.60,566.50 879.10,566.50 880.70,565.50 892.80,565.50 894.40,564.50 903.30,564.50 905.70,565.50 916.20,565.50 921.00,563.50 929.00,563.50 932.70,560.20 932.70,560.20" fill="none" stroke="#8ab8ff" stroke-width="1.0" stroke-linejoin="round" stroke-opacity="1"/>
<polyline points="731.20,569.50 731.20,569.50 734.40,568.50 742.50,568.50 745.00,569.50 759.40,569.50 761.80,568.50 769.90,568.50 772.30,569.50 772.30,569.50 774.70,568.50 783.60,568.50 786.80,570.50 786.80,570.50 789.20,569.50 797.20,569.50 800.50,570.50 800.50,570.50 802.90,569.50 811.70,569.50 813.70,570.50 813.70,570.50 815.80,569.50 823.00,569.50 825.40,570.50 838.00,570.50 839.70,569.50 852.50,569.50 854.20,568.50 864.60,568.50 867.00,569.50 879.10,569.50 881.50,567.50 892.80,567.50 894.40,566.50 921.00,566.50 921.80,565.50 932.70,565.50" fill="none" stroke="#f2cc0c" stroke-width="1.0" stroke-linejoin="round" stroke-opacity="1"/>
<polyline points="1025.30,536.30 1248.60,536.30" fill="none" stroke="#ca95e5" stroke-width="1.0" stroke-linejoin="round" stroke-opacity="1"/>
<polyline points="1025.30,552.40 1248.60,552.40" fill="none" stroke="#8ab8ff" stroke-width="1.0" stroke-linejoin="round" stroke-opacity="1"/>
<polyline points="1025.30,554.30 1248.60,554.30" fill="none" stroke="#73bf69" stroke-width="1.0" stroke-linejoin="round" stroke-opacity="1"/>
<polyline points="1025.30,556.30 1248.60,556.30" fill="none" stroke="#f2cc0c" stroke-width="1.0" stroke-linejoin="round" stroke-opacity="1"/>
</svg></body></html>
